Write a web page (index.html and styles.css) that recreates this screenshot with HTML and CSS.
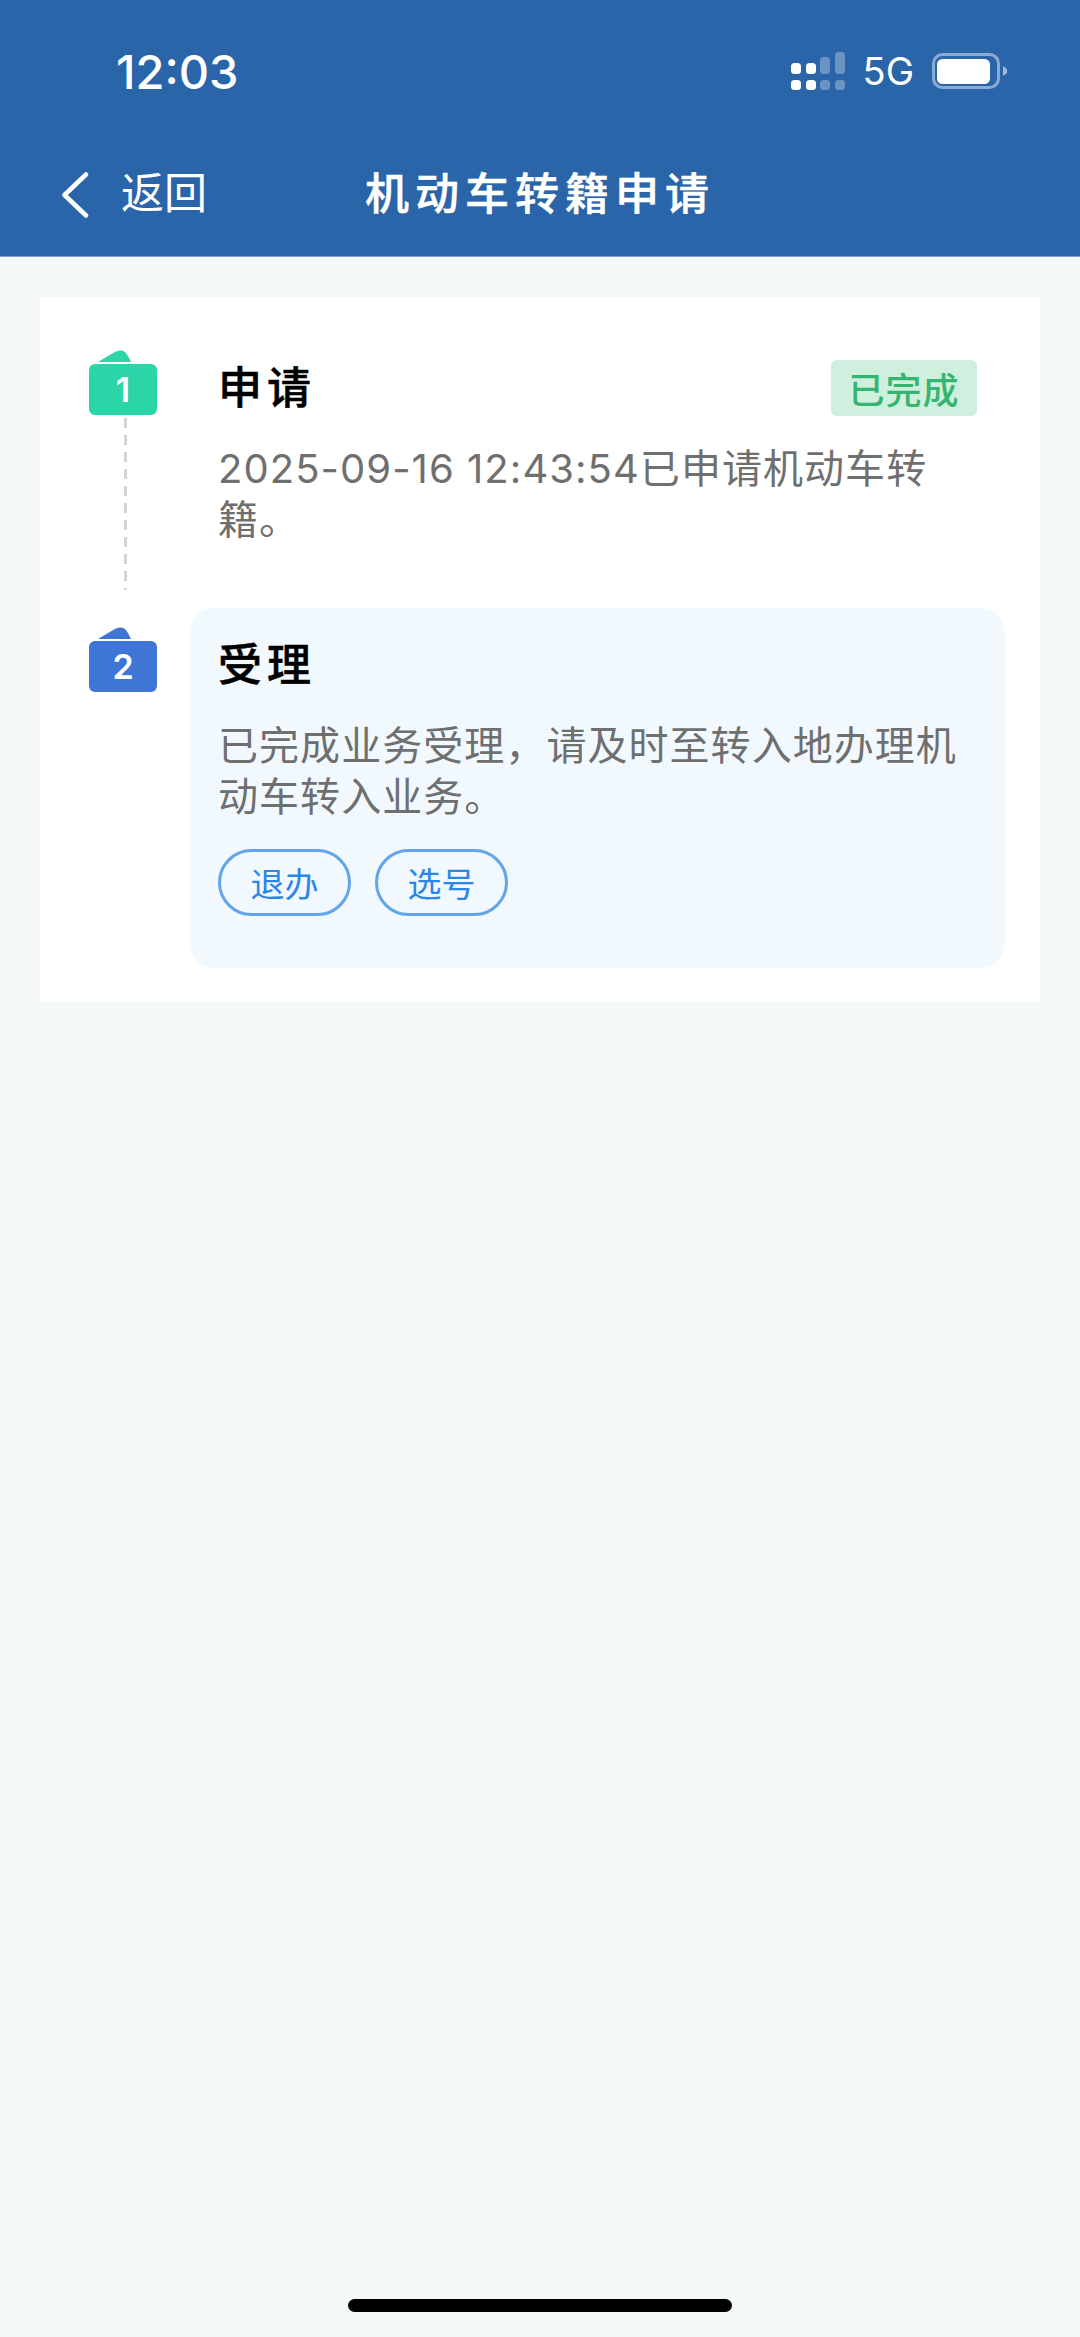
FILE: index.html
```html
<!DOCTYPE html>
<html lang="zh-CN">
<head>
<meta charset="utf-8">
<title>机动车转籍申请</title>
<link rel="stylesheet" href="styles.css">
</head>
<body>
<header class="app-header">
  <div class="status-bar">
    <span class="clock">12:03</span>
    <div class="status-icons">
      <svg class="signal" width="54" height="38" viewBox="0 0 54 38">
        <g fill="#fff">
          <rect x="0" y="11" width="10" height="11" rx="3.5"/>
          <rect x="15" y="11" width="10" height="11" rx="3.5"/>
          <rect x="0" y="28" width="10" height="10" rx="3.5"/>
          <rect x="15" y="28" width="10" height="10" rx="3.5"/>
        </g>
        <g fill="#fff" fill-opacity=".3">
          <rect x="29" y="5" width="10" height="17" rx="3.5"/>
          <rect x="44" y="0" width="10" height="22" rx="3.5"/>
          <rect x="29" y="28" width="10" height="10" rx="3.5"/>
          <rect x="44" y="28" width="10" height="10" rx="3.5"/>
        </g>
      </svg>
      <span class="network">5G</span>
      <svg class="battery" width="75" height="36" viewBox="0 0 75 36">
        <rect x="1.5" y="1.5" width="65" height="33" rx="9" fill="none" stroke="#fff" stroke-opacity=".45" stroke-width="3"/>
        <rect x="5" y="6" width="53" height="25" rx="5.5" fill="#fff"/>
        <path d="M71 13 L75 16 V20 L71 23 Z" fill="#fff" fill-opacity=".55"/>
      </svg>
    </div>
  </div>
  <nav class="nav-bar">
    <a class="back">
      <svg class="chevron" width="28" height="46" viewBox="0 0 28 46">
        <path d="M24 2.5 L2.5 23 L24 43.5" fill="none" stroke="#fff" stroke-width="4.5" stroke-linecap="round" stroke-linejoin="round"/>
      </svg>
      <span class="back-label">返回</span>
    </a>
    <h1 class="nav-title">机动车转籍申请</h1>
    <span></span>
  </nav>
</header>

<main class="content">
  <section class="card">
    <article class="step">
      <div class="rail">
        <div class="marker marker-green">
          <svg class="flap" width="68" height="14" viewBox="0 0 68 14"><path d="M9 12 L25 2.5 Q31 -1 36 2 Q38 3.5 42 12 Z" fill="#2cd5a8"/></svg>
          <span class="marker-num">1</span>
        </div>
        <div class="dash"></div>
      </div>
      <div class="panel">
        <div class="title-row">
          <h2 class="step-title">申请</h2>
          <span class="badge">已完成</span>
        </div>
        <p class="desc">2025-09-16 12:43:54已申请机动车转籍。</p>
      </div>
    </article>
    <article class="step">
      <div class="rail">
        <div class="marker marker-blue">
          <svg class="flap" width="68" height="14" viewBox="0 0 68 14"><path d="M9 12 L25 2.5 Q31 -1 36 2 Q38 3.5 42 12 Z" fill="#3f76d6"/></svg>
          <span class="marker-num">2</span>
        </div>
      </div>
      <div class="panel panel-active">
        <div class="title-row">
          <h2 class="step-title">受理</h2>
        </div>
        <p class="desc">已完成业务受理，请及时至转入地办理机动车转入业务。</p>
        <div class="actions">
          <button class="pill">退办</button>
          <button class="pill">选号</button>
        </div>
      </div>
    </article>
  </section>
</main>

<div class="home-area"><div class="home-bar"></div></div>
</body>
</html>
```

FILE: styles.css
```css
* { box-sizing: border-box; }

html, body { margin: 0; padding: 0; }

body {
  display: flex;
  flex-direction: column;
  min-height: 100vh;
  background: #f5f9fa;
  font-family: "Inter", "Noto Sans CJK SC", sans-serif;
}

.app-header {
  background: #2b65a9;
  color: #fff;
  height: 257px;
  border-bottom: 1px solid #7ea3d0;
}

.status-bar {
  height: 142px;
  padding: 0 73px 0 116px;
  display: flex;
  align-items: center;
  justify-content: space-between;
}

.clock {
  font-size: 47px;
  font-weight: 500;
}

.status-icons {
  display: flex;
  align-items: center;
  gap: 18px;
}

.network {
  font-family: "Inter", sans-serif;
  font-size: 38px;
  font-weight: 400;
}

.nav-bar {
  height: 100px;
  padding: 0 62px;
  display: grid;
  grid-template-columns: 1fr auto 1fr;
  align-items: center;
}

.back {
  display: flex;
  align-items: center;
  gap: 31px;
  font-size: 43px;
  font-family: "Noto Sans CJK SC", sans-serif;
}

.chevron {
  display: block;
  margin-top: 6px;
}

.back-label { margin-bottom: 4px; }

.nav-title {
  margin: 0 0 2px;
  font-family: "Noto Sans CJK SC", sans-serif;
  font-size: 44px;
  font-weight: 500;
  letter-spacing: 6px;
  -webkit-text-stroke: 0.5px #fff;
}

.content {
  flex: 1;
  padding: 40px 40px 0;
}

.card {
  background: #fff;
  padding: 34px 35px 34px 49px;
}

.step {
  display: flex;
  gap: 33px;
}

.rail {
  width: 68px;
  flex: none;
  padding-top: 33px;
  display: flex;
  flex-direction: column;
}

.marker {
  position: relative;
  height: 51px;
  border-radius: 6px;
  display: flex;
  align-items: center;
  justify-content: center;
}

.marker-green { background: #2cd5a8; }
.marker-blue { background: #3f76d6; }

.flap {
  position: absolute;
  left: 0;
  top: -14px;
  display: block;
}

.marker-num {
  color: #fff;
  font-size: 34px;
  font-weight: 600;
}

.dash {
  flex: 1;
  width: 3px;
  margin: 3px 0 18px 35px;
  background: repeating-linear-gradient(to bottom, #d4d4d4 0 10px, transparent 10px 17px);
}

.panel {
  flex: 1;
  padding: 26px 28px 52px;
  border-radius: 24px;
  min-height: 277px;
}

.panel-active { background: #f1f9ff; }

.title-row {
  display: flex;
  align-items: center;
  justify-content: space-between;
  height: 56px;
}

.step-title {
  margin: 0;
  font-family: "Noto Sans CJK SC", sans-serif;
  font-size: 44px;
  font-weight: 500;
  letter-spacing: 5px;
  color: #000;
  -webkit-text-stroke: 0.5px #000;
}

.badge {
  width: 146px;
  height: 56px;
  margin-top: 6px;
  display: flex;
  align-items: center;
  justify-content: center;
  background: #cff0df;
  border-radius: 6px;
  color: #35b56f;
  font-family: "Noto Sans CJK SC", sans-serif;
  font-size: 36px;
  font-weight: 500;
  letter-spacing: 1px;
}

.desc {
  margin: 30px 0 0;
  font-family: "Inter", "Noto Sans CJK SC", sans-serif;
  font-size: 40px;
  line-height: 51px;
  letter-spacing: 1.05px;
  color: #6f6f6f;
}

.actions {
  display: flex;
  gap: 24px;
  margin-top: 27px;
}

.pill {
  width: 133px;
  height: 67px;
  padding: 0;
  background: transparent;
  border: 3px solid #62a5ea;
  border-radius: 34px;
  color: #2b86e8;
  font-family: "Noto Sans CJK SC", sans-serif;
  font-size: 34px;
}

.home-area {
  padding-bottom: 25px;
  display: flex;
  justify-content: center;
}

.home-bar {
  width: 384px;
  height: 13px;
  border-radius: 7px;
  background: #000;
}
```
